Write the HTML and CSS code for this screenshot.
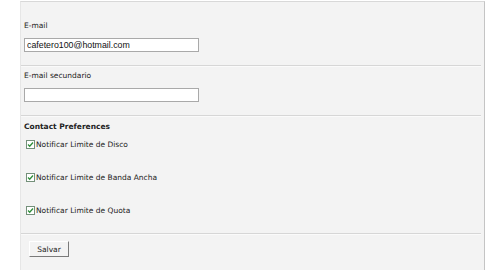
FILE: index.html
```html
<!DOCTYPE html>
<html lang="es">
<head>
    <meta charset="UTF-8">
    <title>Perfil</title>
    <link rel="stylesheet" href="styles.css">
</head>
<body>
    <div class="panel">
        <div class="field">
            <label class="field-label" for="email">E-mail</label>
            <input class="text-input" type="text" id="email" value="cafetero100@hotmail.com">
        </div>
        <div class="field">
            <label class="field-label" for="email2">E-mail secundario</label>
            <input class="text-input" type="text" id="email2" value="">
        </div>
        <div class="field prefs">
            <h3 class="prefs-title">Contact Preferences</h3>
            <label class="check-row">
                <svg class="check-box" width="9" height="9" viewBox="0 0 9 9"><rect x="0.5" y="0.5" width="8" height="8" fill="#fff" stroke="#74907a"/><polyline points="2,4.5 3.7,6.3 7,2.5" fill="none" stroke="#2f8f3a" stroke-width="1.3"/></svg>Notificar Limite de Disco
            </label>
            <label class="check-row">
                <svg class="check-box" width="9" height="9" viewBox="0 0 9 9"><rect x="0.5" y="0.5" width="8" height="8" fill="#fff" stroke="#74907a"/><polyline points="2,4.5 3.7,6.3 7,2.5" fill="none" stroke="#2f8f3a" stroke-width="1.3"/></svg>Notificar Limite de Banda Ancha
            </label>
            <label class="check-row">
                <svg class="check-box" width="9" height="9" viewBox="0 0 9 9"><rect x="0.5" y="0.5" width="8" height="8" fill="#fff" stroke="#74907a"/><polyline points="2,4.5 3.7,6.3 7,2.5" fill="none" stroke="#2f8f3a" stroke-width="1.3"/></svg>Notificar Limite de Quota
            </label>
        </div>
        <div class="actions">
            <button class="save-button">Salvar</button>
        </div>
    </div>
</body>
</html>
```
FILE: styles.css
```css
body {
    margin: 0;
    padding: 1px 0 0 20px;
    background-color: #fff;
    font-family: "DejaVu Sans", Verdana, sans-serif;
    font-size: 7.5px;
    color: #222;
}

.panel {
    width: 463px;
    height: 250px;
    background-color: #f3f3f3;
    border-top: 1px solid #d8d8d8;
    border-left: 1px solid #e6e6e6;
    border-right: 1px solid #c4c4c4;
    padding-top: 18px;
}

.field {
    width: 460px;
    border-bottom: 1px solid #d6d6d6;
    box-shadow: 0 1px 0 #fafafa;
    padding: 0 0 13px 3px;
    margin-bottom: 4px;
    box-sizing: border-box;
}

.field-label {
    display: block;
    height: 12px;
    line-height: 12px;
    margin-bottom: 6px;
}

.text-input {
    display: block;
    width: 175px;
    height: 14px;
    box-sizing: border-box;
    border: 1px solid #a9a9a9;
    background-color: #fff;
    padding: 0 2px;
    margin: 0;
    font-family: "Liberation Sans", Arial, sans-serif;
    font-size: 8.8px;
    color: #111;
}

.prefs {
    padding-top: 1px;
    padding-bottom: 17px;
    margin-bottom: 7px;
}

.prefs-title {
    margin: 0 0 5px 0;
    font-size: 7.5px;
    font-weight: bold;
    height: 12px;
    line-height: 12px;
}

.check-row {
    display: flex;
    align-items: center;
    height: 12px;
    margin: 0 0 21px 2px;
}

.check-row:last-child {
    margin-bottom: 0;
}

.check-box {
    margin-right: 1px;
    flex-shrink: 0;
}

.actions {
    padding-left: 8px;
}

.save-button {
    width: 40px;
    height: 16px;
    padding: 0;
    font-family: "DejaVu Sans", Verdana, sans-serif;
    font-size: 7.5px;
    color: #222;
    background-color: #f3f3f3;
    border: 1px solid;
    border-color: #fff #7a7a7a #7a7a7a #fff;
}
```
